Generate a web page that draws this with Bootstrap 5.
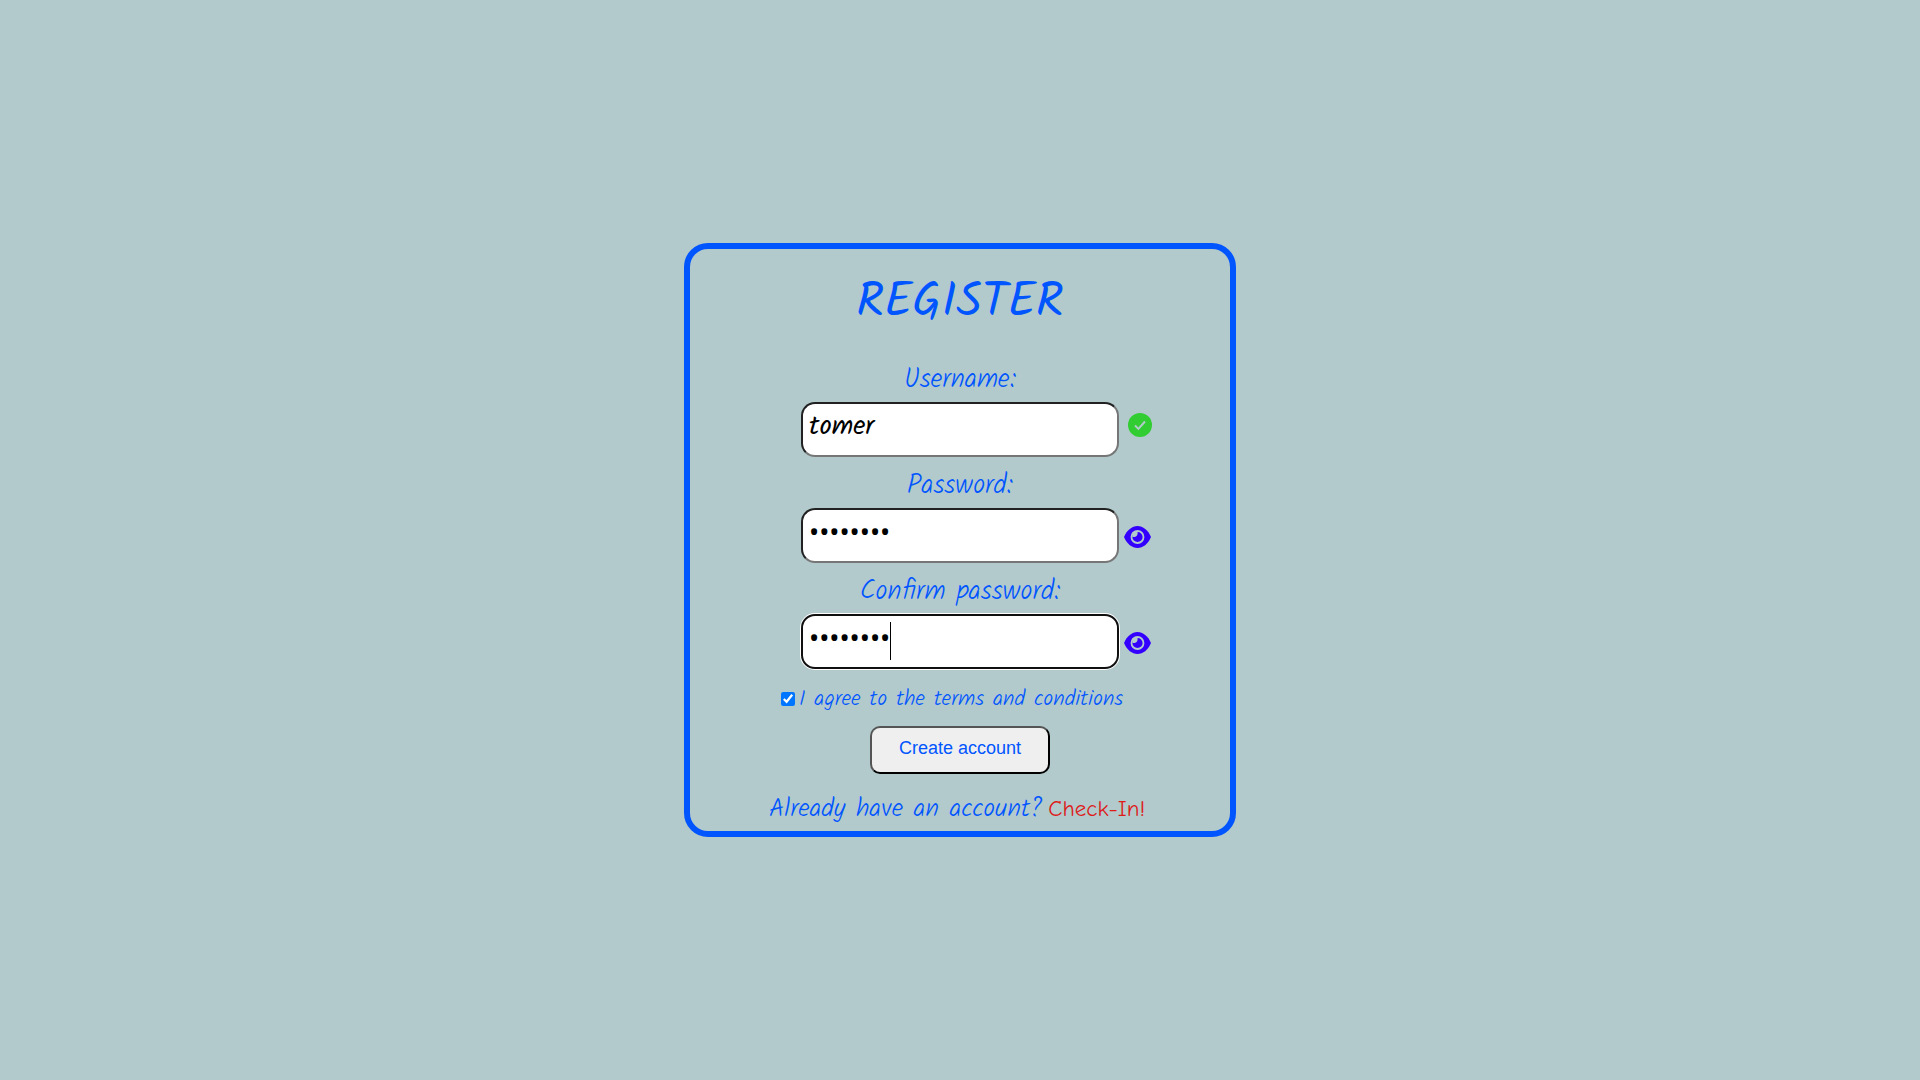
<!DOCTYPE html>
<html lang="en">
<head>
<meta charset="utf-8">
<meta name="viewport" content="width=device-width, initial-scale=1">
<title>Register</title>
<link href="https://cdn.jsdelivr.net/npm/bootstrap@5.3.0/dist/css/bootstrap.min.css" rel="stylesheet">
<style>
body { background: #b2cacc; color: #0055ff; font-family: Kalam, Lato, sans-serif; font-weight: 300; font-size: 27px; line-height: 36px; }
.register-panel { width: 552px; max-width: 100%; border: 6px solid #0055ff; border-radius: 24px; padding: 18px 0 4px; }
.register-title { font-size: 48px; line-height: 72px; font-weight: 400; margin-bottom: 23px; }
.field-row { display: grid; grid-template-columns: 1fr 318px 1fr; margin-bottom: 11px; }
.field-input { display: block; width: 100%; height: 55px; border: 2px inset #767676; border-radius: 14px; background: #fff; color: #000; font: inherit; font-weight: 400; padding: 0 6px 6px; outline: 0; }
.field-input[type=password] { font: 27px "Noto Sans", sans-serif; padding-bottom: 8px; }
.field-active { border: 2px solid #101010; box-shadow: 0 0 0 1px #fff; }
.with-caret::after { content: ""; position: absolute; left: 89px; top: 8px; width: 1px; height: 38px; background: #000; }
.eye-button { color: #3300ff; margin-left: 5px; margin-top: 2px; }
.valid-mark { margin-left: 9px; margin-bottom: 9px; }
.terms-row { font-size: 22px; line-height: 36px; padding-top: 2px; margin-right: 16px; gap: 4px; }
.terms-row input { width: 14px; height: 14px; margin: 0 0 2px; accent-color: #0075ff; }
.submit-button { width: 180px; height: 48px; border: 2px outset #000; border-radius: 10px; background: #efefef; color: #0055ff; font: 18px "Liberation Sans", Arial, sans-serif; padding: 0 0 3px; }
.account-row { font-size: 26px; margin-top: 17px; margin-right: 6px; gap: 6px; }
.checkin-link { color: #dd1c1a; font-family: "Comic Neue", Kalam, Lato, sans-serif; font-weight: 400; font-size: 23px; }
</style>
</head>
<body>
<main class="min-vh-100 d-flex align-items-center justify-content-center">
  <form class="register-panel text-center">
    <h1 class="register-title">REGISTER</h1>
    <label class="d-block mb-1" for="username">Username:</label>
    <div class="field-row">
      <div></div>
      <input class="field-input" id="username" type="text" value="tomer">
      <svg class="valid-mark align-self-center" width="24" height="24" viewBox="0 0 24 24" role="img" aria-label="Valid"><circle cx="12" cy="12" r="12" fill="#32cd32"/><path d="M7 12.5l3.4 3.4L17 8.5" fill="none" stroke="#b2cacc" stroke-width="2"/></svg>
    </div>
    <label class="d-block mb-1" for="password">Password:</label>
    <div class="field-row">
      <div></div>
      <input class="field-input" id="password" type="password" value="12345678">
      <button class="eye-button btn p-0 border-0 align-self-center d-flex" type="button" aria-label="Show password"><svg width="27" height="22" viewBox="0 0 27 22"><path fill="currentColor" d="M0 11C3 4 8 0 13.500 0S24 4 27 11C24 18 19 22 13.500 22S3 18 0 11Z"/><circle cx="13.500" cy="11" r="6" fill="none" stroke="#b2cacc" stroke-width="1.800"/><path d="M13.500 6c.6 3.400-1.400 5.400-5 5V6Z" fill="#b2cacc"/></svg></button>
    </div>
    <label class="d-block mb-1" for="confirm">Confirm password:</label>
    <div class="field-row">
      <div></div>
      <div class="with-caret position-relative"><input class="field-input field-active" id="confirm" type="password" value="12345678"></div>
      <button class="eye-button btn p-0 border-0 align-self-center d-flex" type="button" aria-label="Show confirmed password"><svg width="27" height="22" viewBox="0 0 27 22"><path fill="currentColor" d="M0 11C3 4 8 0 13.500 0S24 4 27 11C24 18 19 22 13.500 22S3 18 0 11Z"/><circle cx="13.500" cy="11" r="6" fill="none" stroke="#b2cacc" stroke-width="1.800"/><path d="M13.500 6c.6 3.400-1.400 5.400-5 5V6Z" fill="#b2cacc"/></svg></button>
    </div>
    <div class="terms-row d-flex align-items-center justify-content-center">
      <input id="terms" type="checkbox" checked><label for="terms">I agree to the terms and conditions</label>
    </div>
    <button class="submit-button mt-2" type="submit">Create account</button>
    <div class="account-row d-flex justify-content-center align-items-baseline"><span>Already have an account?</span><a class="checkin-link text-decoration-none" href="#">Check-In!</a></div>
  </form>
</main>
<script src="https://cdn.jsdelivr.net/npm/bootstrap@5.3.0/dist/js/bootstrap.bundle.min.js"></script>
</body>
</html>
